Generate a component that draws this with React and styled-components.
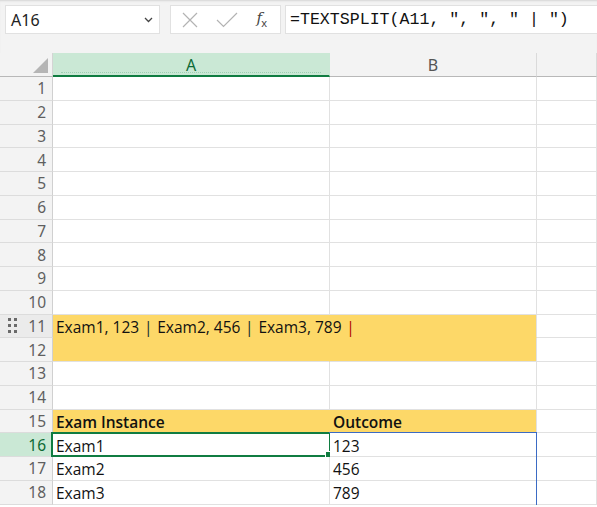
import React from "react";
import styled, { createGlobalStyle } from "styled-components";

const GlobalStyle = createGlobalStyle`
  html, body {
    margin: 0;
    padding: 0;
    background: #ffffff;
    overflow: hidden;
  }
`;

const Page = styled.div`
  width: 597px;
  height: 507px;
  overflow: hidden;
  font-family: "Noto Sans", "Open Sans", sans-serif;
  background: #ffffff;
`;

const Toolbar = styled.div`
  height: 53px;
  background: #f3f3f3;
  box-shadow: inset 0 2px 2px -1px #d6d6d6;
  display: flex;
  align-items: flex-start;
  padding: 5px 0 0 5px;
  box-sizing: border-box;
  gap: 10px;
`;

const Box = styled.div`
  height: 29px;
  box-sizing: border-box;
  background: #ffffff;
  border: 1px solid #e1e1e1;
  display: flex;
  align-items: center;
`;

const NameBox = styled(Box)`
  width: 155px;
  padding: 0 6px 0 5px;
  justify-content: space-between;
  font-size: 16px;
  color: #222;
`;

const FxBox = styled(Box)`
  width: 111px;
  padding: 0 13px 0 11px;
  justify-content: space-between;
  margin-right: -6px;
`;

const FormulaBox = styled(Box)`
  flex: 1;
  padding-left: 4px;
  font-family: "Liberation Mono", "DejaVu Sans Mono", monospace;
  font-size: 16.6px;
  color: #111;
  border-right: none;
  white-space: pre;
`;

const Fx = styled.span`
  font-family: "DejaVu Serif", "Liberation Serif", serif;
  font-style: italic;
  font-size: 15px;
  color: #444;
  sub {
    font-size: 11px;
    font-style: normal;
    font-family: "Noto Sans", sans-serif;
    margin-left: -1px;
  }
`;

const Grid = styled.div`
  display: flex;
  flex-direction: column;
`;

const Row = styled.div`
  display: flex;
  height: ${(p) => (p.$header ? "24px" : "23.75px")};
`;

const Corner = styled.div`
  width: 53px;
  flex: none;
  box-sizing: border-box;
  background: #f3f3f3;
  border-right: 1px solid #d4d4d4;
  border-bottom: 1px solid #b8b8b8;
  display: flex;
  align-items: flex-end;
  justify-content: flex-end;
  padding: 0 4px 3px 0;
`;

const ColHead = styled.div`
  width: ${(p) => p.$w}px;
  flex: ${(p) => (p.$grow ? "1" : "none")};
  box-sizing: border-box;
  background: ${(p) => (p.$active ? "#cae8d5" : "#f3f3f3")};
  color: ${(p) => (p.$active ? "#0e6a36" : "#555")};
  border-right: 1px solid ${(p) => (p.$active ? "#cae8d5" : "#dadada")};
  border-bottom: ${(p) => (p.$active ? "2px solid #107c41" : "1px solid #b8b8b8")};
  display: flex;
  align-items: center;
  justify-content: center;
  font-size: 16px;
  padding-top: ${(p) => (p.$active ? "1px" : "0")};
  position: relative;
`;

const Dotted = styled.div`
  position: absolute;
  left: 8px;
  right: 8px;
  bottom: 2px;
  border-bottom: 1px dotted #9fcfb3;
`;

const RowHead = styled.div`
  width: 53px;
  flex: none;
  box-sizing: border-box;
  background: ${(p) => (p.$active ? "#cae8d5" : p.$hover ? "#ebebeb" : "#f3f3f3")};
  color: ${(p) => (p.$active ? "#0e6a36" : "#5f5f5f")};
  border-right: 1px solid #d0d0d0;
  border-bottom: 1px solid #dcdcdc;
  display: flex;
  align-items: center;
  justify-content: space-between;
  padding: 0 6px 0 8px;
  font-size: 15.5px;
`;

const Handle = styled.div`
  display: grid;
  grid-template-columns: 3px 3px;
  gap: 3px 3px;
  span {
    width: 3px;
    height: 3px;
    background: #6a6a6a;
  }
`;

const Cell = styled.div`
  width: ${(p) => p.$w}px;
  flex: ${(p) => (p.$grow ? "1" : "none")};
  box-sizing: border-box;
  background: ${(p) => (p.$fill ? "#fdd868" : "#ffffff")};
  border-right: 1px solid ${(p) => (p.$fillRight ? "#fdd868" : "#e1e1e1")};
  border-bottom: 1px solid ${(p) => (p.$fillBottom ? "#fdd868" : "#e1e1e1")};
  font-family: "Open Sans", "Noto Sans", sans-serif;
  font-size: 15.5px;
  font-weight: ${(p) => (p.$bold ? 600 : 400)};
  color: #111;
  padding: 2px 0 0 3px;
  white-space: nowrap;
  display: flex;
  align-items: center;
  position: relative;
  overflow: visible;
  z-index: ${(p) => (p.$over ? 2 : 1)};
`;

const Pipe = styled.span`
  flex: none;
  width: 18px;
  text-align: center;
  color: ${(p) => (p.$red ? "#b00000" : "#123030")};
`;

const Selection = styled.div`
  position: absolute;
  left: -2px;
  top: -1px;
  right: -2px;
  bottom: -1px;
  border: 2px solid #107c41;
  z-index: 4;
  pointer-events: none;
`;

const FillHandle = styled.div`
  position: absolute;
  right: -4px;
  bottom: -4px;
  width: 6px;
  height: 6px;
  background: #107c41;
  border: 1px solid #ffffff;
`;

const Spill = styled.div`
  position: absolute;
  left: -1px;
  top: -1px;
  right: -1px;
  bottom: -1px;
  border: solid #3b6bc4;
  border-width: ${(p) => p.$sides};
  z-index: 3;
  pointer-events: none;
`;

const CloseIcon = () => (
  <svg width="16" height="16" viewBox="0 0 16 16">
    <path d="M1 1 L15 15 M15 1 L1 15" stroke="#b3b3b3" strokeWidth="1.2" fill="none" />
  </svg>
);

const CheckIcon = () => (
  <svg width="22" height="16" viewBox="0 0 22 16">
    <path d="M1 8 L7.5 14.5 L21 1" stroke="#b3b3b3" strokeWidth="1.2" fill="none" />
  </svg>
);

const Chevron = () => (
  <svg width="9" height="6" viewBox="0 0 9 6">
    <path d="M1 1 L4.5 4.5 L8 1" stroke="#444" strokeWidth="1.3" fill="none" />
  </svg>
);

const Triangle = () => (
  <svg width="15" height="15" viewBox="0 0 15 15">
    <path d="M15 0 L15 15 L0 15 Z" fill="#b5b5b5" />
  </svg>
);

const W_A = 277;
const W_B = 207;

const rowsData = Array.from({ length: 18 }, (_, i) => i + 1);

function renderCells(n) {
  if (n === 11) {
    return (
      <>
        <Cell $w={W_A} $fill $fillRight $fillBottom $over>
          Exam1, 123<Pipe>|</Pipe>Exam2, 456<Pipe>|</Pipe>Exam3, 789<Pipe $red>|</Pipe>
        </Cell>
        <Cell $w={W_B} $fill $fillBottom />
        <Cell $grow />
      </>
    );
  }
  if (n === 12) {
    return (
      <>
        <Cell $w={W_A} $fill $fillRight />
        <Cell $w={W_B} $fill />
        <Cell $grow />
      </>
    );
  }
  if (n === 15) {
    return (
      <>
        <Cell $w={W_A} $fill $fillRight $bold>Exam Instance</Cell>
        <Cell $w={W_B} $fill $bold>Outcome</Cell>
        <Cell $grow />
      </>
    );
  }
  if (n >= 16) {
    const vals = { 16: ["Exam1", "123"], 17: ["Exam2", "456"], 18: ["Exam3", "789"] }[n];
    return (
      <>
        <Cell $w={W_A}>
          {vals[0]}
          {n === 16 && (
            <Selection>
              <FillHandle />
            </Selection>
          )}
        </Cell>
        <Cell $w={W_B}>
          {vals[1]}
          <Spill $sides={n === 16 ? "1px 1px 0 0" : "0 1px 0 0"} />
        </Cell>
        <Cell $grow />
      </>
    );
  }
  return (
    <>
      <Cell $w={W_A} />
      <Cell $w={W_B} />
      <Cell $grow />
    </>
  );
}

export default function App() {
  return (
    <Page>
      <GlobalStyle />
      <Toolbar>
        <NameBox>
          A16
          <Chevron />
        </NameBox>
        <FxBox>
          <CloseIcon />
          <CheckIcon />
          <Fx>
            f<sub>x</sub>
          </Fx>
        </FxBox>
        <FormulaBox>=TEXTSPLIT(A11, ", ", " | ")</FormulaBox>
      </Toolbar>
      <Grid>
        <Row $header>
          <Corner>
            <Triangle />
          </Corner>
          <ColHead $w={W_A} $active>
            A
            <Dotted />
          </ColHead>
          <ColHead $w={W_B}>B</ColHead>
          <ColHead $grow />
        </Row>
        {rowsData.map((n) => (
          <Row key={n}>
            <RowHead $active={n === 16} $hover={n === 11}>
              {n === 11 ? (
                <Handle>
                  <span /><span /><span /><span /><span /><span />
                </Handle>
              ) : (
                <span />
              )}
              {n}
            </RowHead>
            {renderCells(n)}
          </Row>
        ))}
      </Grid>
    </Page>
  );
}
